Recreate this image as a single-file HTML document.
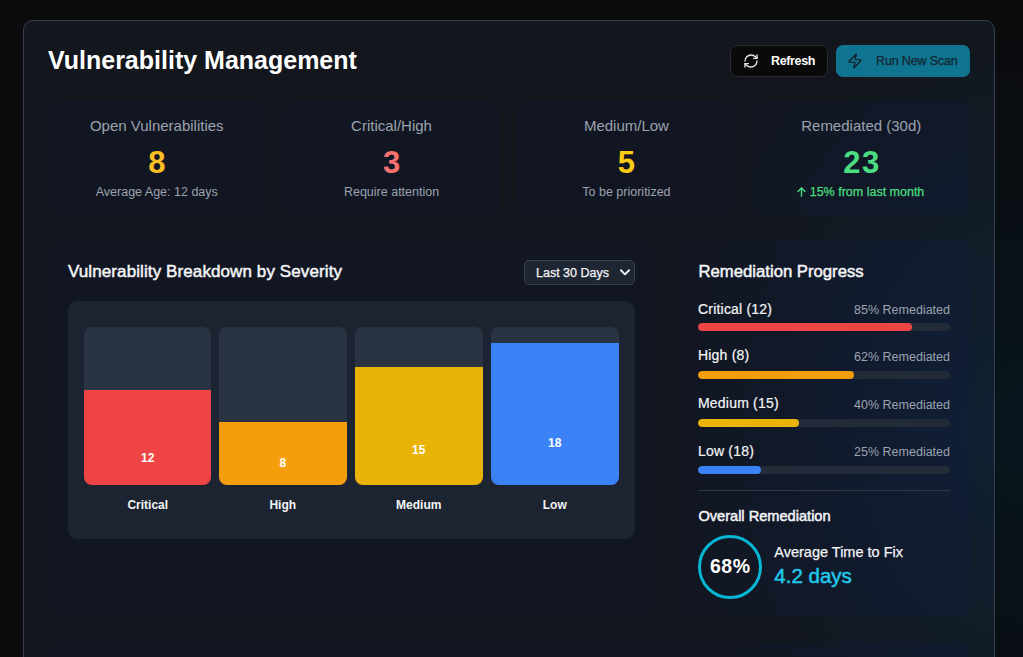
<!DOCTYPE html>
<html>
<head>
<meta charset="utf-8">
<style>
*{box-sizing:border-box;margin:0;padding:0}
html,body{width:1023px;height:657px;overflow:hidden}
body{font-family:"Liberation Sans",sans-serif;background:radial-gradient(280px 420px at 1023px 430px,rgba(4,32,48,0.45),rgba(4,32,48,0)),#0b0b0d;position:relative;color:#fff}
.abs{position:absolute}
.card{position:absolute;left:23px;top:20px;width:972px;height:700px;border:1px solid #364050;border-radius:10px;background:radial-gradient(300px 440px at 1010px 430px,rgba(10,48,80,0.42),rgba(10,48,80,0)) fixed,#13161c;overflow:hidden}
.t{position:absolute;white-space:nowrap;line-height:1}
.med{-webkit-text-stroke:0.25px currentColor}
.sb{-webkit-text-stroke:0.5px currentColor}
.stat{position:absolute;top:80px;width:217.5px;height:114px;border-radius:10px;background:radial-gradient(320px 460px at 1010px 430px,rgba(14,45,90,0.4),rgba(14,45,90,0)) fixed,#111622}
.stat .lbl{position:absolute;left:0;right:0;text-align:center;top:97px}
.panel{position:absolute;top:219px;height:376px;border-radius:10px;background:radial-gradient(320px 460px at 1010px 430px,rgba(14,45,90,0.4),rgba(14,45,90,0)) fixed,#111622}
.stat2{position:absolute;top:621px;height:200px;border-radius:10px;background:radial-gradient(320px 460px at 1010px 430px,rgba(14,45,90,0.4),rgba(14,45,90,0)) fixed,#111622}
.bar{position:absolute;top:306px;width:128px;height:158px;background:#2a3341;border-radius:8px;overflow:hidden}
.fill{position:absolute;left:0;right:0;bottom:0}
.bl{width:127.5px;text-align:center;font-size:12px;font-weight:700;color:#fff}
.cl{width:127.5px;text-align:center;font-size:12px;font-weight:700;color:#f3f4f6;top:478.2px}
.rl{left:674px;font-size:14px;letter-spacing:0.2px;margin-top:-1px;color:#f3f4f6;-webkit-text-stroke:0.22px currentColor}
.rr{right:44px;font-size:12.5px;color:#9ca3af}
.track{position:absolute;left:674px;width:252px;height:8px;border-radius:4px;background:#232b38;overflow:hidden}
.tf{position:absolute;left:0;top:0;bottom:0;border-radius:4px}
</style>
</head>
<body>
<div class="card">
  <!-- coordinates inside card are page - (24,21) -->
  <div class="t" style="left:24px;top:27px;font-size:25px;font-weight:700;letter-spacing:0px">Vulnerability Management</div>

  <!-- Refresh button -->
  <div class="abs" style="left:706px;top:24px;width:97.5px;height:32px;background:#0a0a0b;border:1px solid #272a30;border-radius:7px"></div>
  <svg class="abs" style="left:718.5px;top:32px" width="16" height="16" viewBox="0 0 24 24" fill="none" stroke="#e5e7eb" stroke-width="2" stroke-linecap="round" stroke-linejoin="round"><path d="M3 12a9 9 0 0 1 9-9 9.75 9.75 0 0 1 6.74 2.74L21 8"/><path d="M21 3v5h-5"/><path d="M21 12a9 9 0 0 1-9 9 9.75 9.75 0 0 1-6.74-2.74L3 16"/><path d="M8 16H3v5"/></svg>
  <div class="t" style="left:747px;top:34px;font-size:12.5px;font-weight:700;letter-spacing:-0.35px">Refresh</div>

  <!-- Run New Scan button -->
  <div class="abs" style="left:812px;top:24px;width:134px;height:32px;background:#0e7490;border-radius:7px"></div>
  <svg class="abs" style="left:823px;top:32px" width="16" height="16" viewBox="0 0 24 24" fill="none" stroke="#13232c" stroke-width="2" stroke-linecap="round" stroke-linejoin="round"><path d="M4 14a1 1 0 0 1-.78-1.63l9.9-10.2a.5.5 0 0 1 .86.46l-1.92 6.02A1 1 0 0 0 13 10h7a1 1 0 0 1 .78 1.63l-9.9 10.2a.5.5 0 0 1-.86-.46l1.92-6.02A1 1 0 0 0 11 14z"/></svg>
  <div class="t med" style="left:852px;top:34px;font-size:12.5px;color:#142630;letter-spacing:-0.15px">Run New Scan</div>

  <!-- Stats -->
  <div class="stat" style="left:24px"></div>
  <div class="stat" style="left:258.2px"></div>
  <div class="stat" style="left:493.1px"></div>
  <div class="stat" style="left:727.9px"></div>

  <!-- Stat texts -->
  <div class="t" style="left:24px;width:217.5px;text-align:center;top:97.3px;font-size:15px;color:#9ca3af">Open Vulnerabilities</div>
  <div class="t" style="left:24px;width:217.5px;text-align:center;top:125.9px;font-size:31px;font-weight:700;color:#fbbf24">8</div>
  <div class="t" style="left:24px;width:217.5px;text-align:center;top:164.8px;font-size:12.5px;color:#9ca3af">Average Age: 12 days</div>

  <div class="t" style="left:258.8px;width:217.5px;text-align:center;top:97.3px;font-size:15px;color:#9ca3af">Critical/High</div>
  <div class="t" style="left:258.8px;width:217.5px;text-align:center;top:125.9px;font-size:31px;font-weight:700;color:#f87171">3</div>
  <div class="t" style="left:258.8px;width:217.5px;text-align:center;top:164.8px;font-size:12.5px;color:#9ca3af">Require attention</div>

  <div class="t" style="left:493.7px;width:217.5px;text-align:center;top:97.3px;font-size:15px;color:#9ca3af">Medium/Low</div>
  <div class="t" style="left:493.7px;width:217.5px;text-align:center;top:125.9px;font-size:31px;font-weight:700;color:#facc15">5</div>
  <div class="t" style="left:493.7px;width:217.5px;text-align:center;top:164.8px;font-size:12.5px;color:#9ca3af">To be prioritized</div>

  <div class="t" style="left:728.5px;width:217.5px;text-align:center;top:97.3px;font-size:15px;color:#9ca3af">Remediated (30d)</div>
  <div class="t" style="left:728.5px;width:217.5px;text-align:center;top:125.9px;font-size:31px;font-weight:700;letter-spacing:1.5px;padding-left:1.5px;color:#4ade80">23</div>
  <svg class="abs" style="left:772.5px;top:166px" width="9" height="10" viewBox="0 0 9 10" fill="none" stroke="#4ade80" stroke-width="1.4" stroke-linecap="round" stroke-linejoin="round"><path d="M4.5 9.2V1"/><path d="M1 4.4 4.5 0.9 8 4.4"/></svg>
  <div class="t med" style="left:785.7px;top:164.9px;font-size:12.5px;color:#4ade80">15% from last month</div>

  <!-- Left panel -->
  <div class="panel" style="left:24px;width:606px"></div>
  <div class="t sb" style="left:44px;top:242.2px;font-size:17px;letter-spacing:0.1px;color:#f3f4f6">Vulnerability Breakdown by Severity</div>
  <div class="abs" style="left:500px;top:239px;width:111px;height:25px;background:#1f2633;border:1px solid #394150;border-radius:5px"></div>
  <div class="t med" style="left:512px;top:246px;font-size:12.5px;color:#f3f4f6">Last 30 Days</div>
  <svg class="abs" style="left:594px;top:244px" width="14" height="14" viewBox="0 0 24 24" fill="none" stroke="#f3f4f6" stroke-width="3.2" stroke-linecap="round" stroke-linejoin="round"><path d="m5 9 7 7 7-7"/></svg>

  <div class="abs" style="left:44px;top:280px;width:567px;height:238px;background:#1c2431;border-radius:9px"></div>
  <div class="bar" style="left:60px;width:127px"><div class="fill" style="height:95px;background:#ef4444"></div></div>
  <div class="bar" style="left:195px"><div class="fill" style="height:63px;background:#f59e0b"></div></div>
  <div class="bar" style="left:331px"><div class="fill" style="height:118.5px;background:#eab308"></div></div>
  <div class="bar" style="left:467px"><div class="fill" style="height:142px;background:#3b82f6"></div></div>
  <div class="t bl" style="left:60px;top:431.1px">12</div>
  <div class="t bl" style="left:195px;top:435.8px">8</div>
  <div class="t bl" style="left:331px;top:422.7px">15</div>
  <div class="t bl" style="left:467px;top:415.7px">18</div>
  <div class="t cl" style="left:60px">Critical</div>
  <div class="t cl" style="left:195px">High</div>
  <div class="t cl" style="left:331px">Medium</div>
  <div class="t cl" style="left:467px">Low</div>

  <!-- Right panel -->
  <div class="panel" style="left:654px;width:292px"></div>
  <div class="t sb" style="left:674.5px;top:243px;font-size:16.7px;color:#f3f4f6">Remediation Progress</div>

  <div class="t rl" style="top:281.5px">Critical (12)</div>
  <div class="t rr" style="top:282.8px">85% Remediated</div>
  <div class="track" style="top:302px"><div class="tf" style="width:85%;background:#ef4444"></div></div>

  <div class="t rl" style="top:328.2px">High (8)</div>
  <div class="t rr" style="top:329.5px">62% Remediated</div>
  <div class="track" style="top:350px"><div class="tf" style="width:62%;background:#f59e0b"></div></div>

  <div class="t rl" style="top:376.2px">Medium (15)</div>
  <div class="t rr" style="top:377.5px">40% Remediated</div>
  <div class="track" style="top:397.6px"><div class="tf" style="width:40%;background:#eab308"></div></div>

  <div class="t rl" style="top:424px">Low (18)</div>
  <div class="t rr" style="top:425.3px">25% Remediated</div>
  <div class="track" style="top:445.2px"><div class="tf" style="width:25%;background:#3b82f6"></div></div>

  <div class="abs" style="left:674px;top:469px;width:252px;height:1px;background:#2f3644"></div>
  <div class="t sb" style="left:674.4px;top:488px;font-size:14.6px;color:#f3f4f6">Overall Remediation</div>
  <div class="abs" style="left:674px;top:513.6px;width:64px;height:64px;border:3.5px solid #06b6d4;border-radius:50%"></div>
  <div class="t" style="left:674px;width:64px;text-align:center;top:535.6px;font-size:19.5px;font-weight:700;letter-spacing:0.5px;padding-left:0.5px;color:#fff">68%</div>
  <div class="t med" style="left:750.3px;top:523.7px;font-size:14.5px;color:#f3f4f6">Average Time to Fix</div>
  <div class="t" style="left:750.3px;top:544.8px;font-size:20.5px;color:#22c8ec;-webkit-text-stroke:0.5px #22c8ec">4.2 days</div>
  <div class="stat2" style="left:24px;width:922px"></div>
</div>
</body>
</html>
